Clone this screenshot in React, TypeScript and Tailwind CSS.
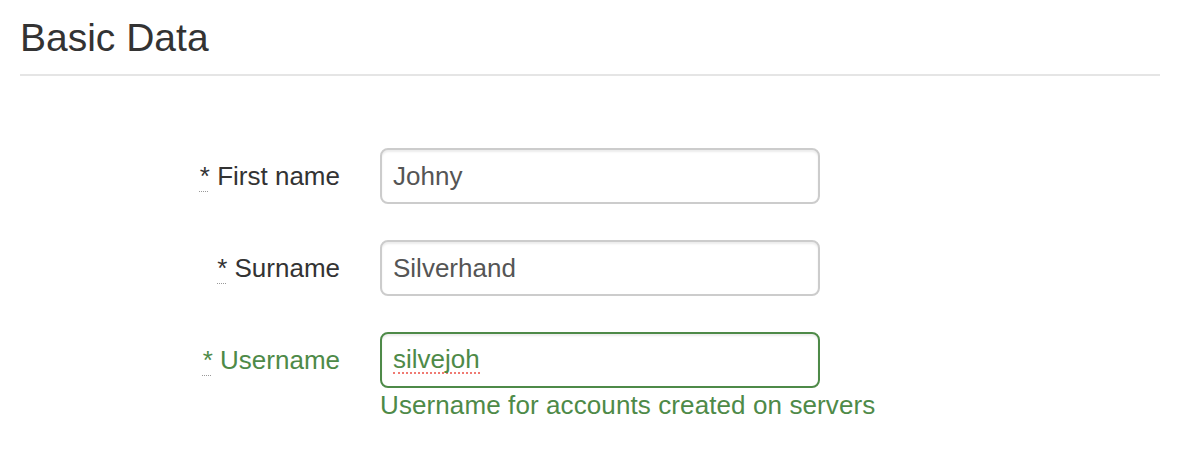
import React from "react"

interface FieldProps {
  label: string
  value: string
  success?: boolean
  help?: string
}

function Field({ label, value, success, help }: FieldProps) {
  const labelColor = success ? "text-[#4e8a48]" : "text-[#333]"
  return (
    <div className="flex items-start">
      <div className={`w-[320px] h-[56px] flex items-center justify-end text-[26px] leading-[34px] ${labelColor}`}>
        <label>
          <abbr title="required" className="no-underline">
            <span className="underline decoration-dotted decoration-1 underline-offset-[6px] decoration-[#999]">*</span>
          </abbr>{" "}
          {label}
        </label>
      </div>
      <div className="ml-[40px] w-[440px]">
        <div
          className={`h-[56px] flex items-center rounded-[8px] border-2 bg-white pl-[11px] text-[26px] shadow-[inset_0_2px_2px_rgba(0,0,0,0.075)] ${
            success ? "border-[#4e8a48] text-[#4e8a48]" : "border-[#ccc] text-[#555]"
          }`}
        >
          {success ? (
            <span className="leading-none border-b-2 border-dotted border-[#f07a72]">{value}</span>
          ) : (
            <span>{value}</span>
          )}
        </div>
        {help && (
          <p className="text-[26px] leading-[34px] tracking-[0.1px] text-[#4e8a48] whitespace-nowrap">{help}</p>
        )}
      </div>
    </div>
  )
}

export default function App() {
  return (
    <div className="min-h-[460px] bg-white px-[20px] pt-[16px] font-['Liberation_Sans',Arial,sans-serif] w-[1180px]">
      <h3 className="text-[39px] leading-[43px] text-[#333] pb-[15px] border-b-2 border-[#e5e5e5]">Basic Data</h3>
      <div className="mt-[72px] flex flex-col gap-[36px]">
        <Field label="First name" value="Johny" />
        <Field label="Surname" value="Silverhand" />
        <Field
          label="Username"
          value="silvejoh"
          success
          help="Username for accounts created on servers"
        />
      </div>
    </div>
  )
}
